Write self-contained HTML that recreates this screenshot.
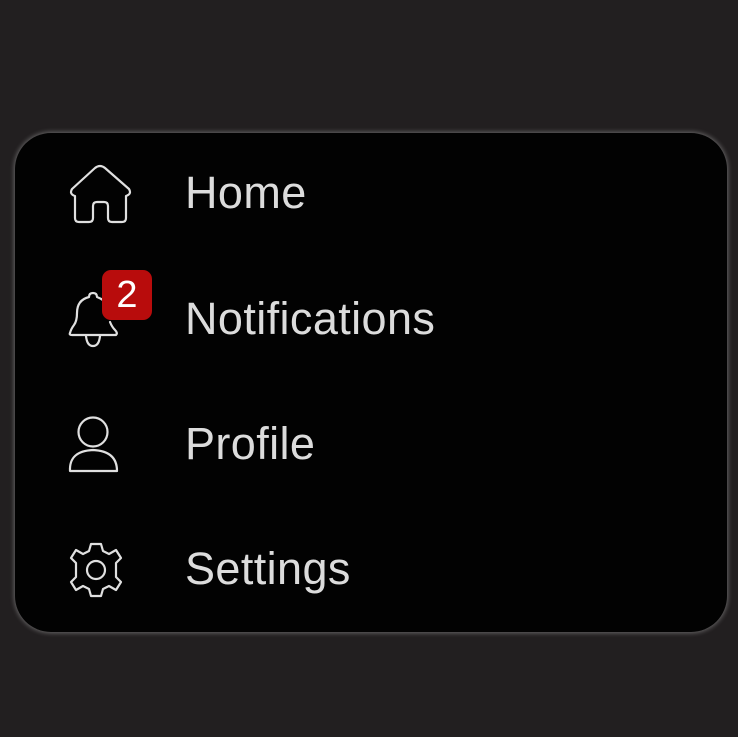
<!DOCTYPE html>
<html><head><meta charset="utf-8"><style>
html,body{margin:0;padding:0;}
body{width:738px;height:737px;background:#221f20;position:relative;overflow:hidden;font-family:"Liberation Sans",sans-serif;}
.panel{position:absolute;left:15px;top:133px;width:712px;height:499px;background:#020202;border-radius:36px;box-shadow:0 0 5px 1px rgba(210,210,210,0.4);}
.t{position:absolute;left:185px;font-size:45px;line-height:46px;color:#dcdcdc;letter-spacing:0.4px;}
svg{position:absolute;}
.badge{position:absolute;left:102px;top:270px;width:50px;height:50px;background:#b80c0c;border-radius:9px;color:#fff;font-size:38px;line-height:50px;text-align:center;}
</style></head><body>
<div class="panel"></div>
<svg width="738" height="737" style="left:0;top:0" fill="none" stroke="#e0e0e0" stroke-width="2.2" stroke-linejoin="round" stroke-linecap="round">
<path d="M95 168 Q100 164 105 168 L129 189 Q132 194 126 196 L126 218 Q126 222 122 222 L112 222 Q108 222 108 218 L108 206 Q108 202 104 202 L97 202 Q93 202 93 206 L93 218 Q93 222 89 222 L79 222 Q75 222 75 218 L75 196 Q69 194 72 189 Z"/>
<path d="M70 333 Q71 329 74 325 Q77 321 77 313 Q77 300 89 297 Q89 293 93 293 Q97 293 97 297 Q105 300 108 306"/>
<path d="M110 322 Q112 327 115 330 Q118 333 116 335 L72 335 Q69 335 70 333"/>
<path d="M86 336 Q87 346 93 346 Q99 346 100 336"/>
<circle cx="93" cy="432" r="14.5"/>
<path d="M70 471 Q69 451 93 450 Q117 451 117 471 Z"/>
<circle cx="96" cy="570" r="9"/>
<path d="M91 544 L101 544 L103 551 L109 554 L116 550 L121 558 L116 563 L116 577 L121 582 L116 590 L109 586 L103 589 L101 596 L91 596 L89 589 L83 586 L76 590 L71 582 L76 577 L76 563 L71 558 L76 550 L83 554 L89 551 Z"/>
</svg>
<div class="badge">2</div>
<div class="t" style="top:170px">Home</div>
<div class="t" style="top:296px">Notifications</div>
<div class="t" style="top:421px">Profile</div>
<div class="t" style="top:546px">Settings</div>
</body></html>
